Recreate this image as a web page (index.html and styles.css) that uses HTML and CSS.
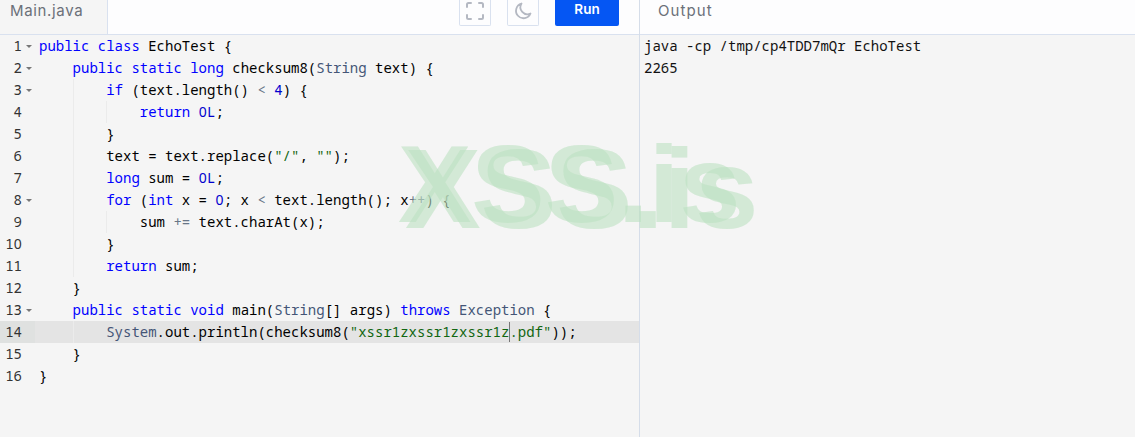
FILE: index.html
```html
<!DOCTYPE html>
<html lang="en">
<head>
<meta charset="utf-8">
<title>Main.java</title>
<link rel="stylesheet" href="styles.css">
</head>
<body>
<div class="app">
  <section class="pane editor-pane">
    <header class="bar">
      <div class="tab">Main.java</div>
      <div class="actions">
        <button class="icon-btn" aria-label="Fullscreen">
          <svg width="18" height="18" viewBox="0 0 18 18" fill="none" stroke="#b4b8c2" stroke-width="2" stroke-linecap="round" stroke-linejoin="round"><path d="M1 5V2.500Q1 1 2.500 1H5M13 1h2.500Q17 1 17 2.500V5M17 13v2.500Q17 17 15.500 17H13M5 17H2.500Q1 17 1 15.500V13"/></svg>
        </button>
        <button class="icon-btn" aria-label="Dark mode">
          <svg width="18" height="18" viewBox="0 0 18 18" fill="none" stroke="#b4b8c2" stroke-width="1.800" stroke-linejoin="round"><path d="M7.500 1.500A7.500 7.500 0 1 0 16.500 11.500 7 7 0 0 1 7.500 1.500Z"/></svg>
        </button>
        <button class="run-btn">Run</button>
      </div>
    </header>
    <div class="code">
      <div class="gutter">
        <div class="num fold">1</div><div class="num fold">2</div><div class="num fold">3</div><div class="num">4</div><div class="num">5</div><div class="num">6</div><div class="num">7</div><div class="num fold">8</div><div class="num">9</div><div class="num">1<span class="z">0</span></div><div class="num">11</div><div class="num">12</div><div class="num fold">13</div><div class="num active">14</div><div class="num">15</div><div class="num">16</div>
      </div>
      <div class="lines">
<div class="line"><span class="k">public</span> <span class="k">class</span> EchoTest {</div>
<div class="line"><span class="i1"></span><span class="k">public</span> <span class="k">static</span> <span class="k">long</span> checksum8(<span class="t">String</span> text) {</div>
<div class="line"><span class="i1"></span><span class="i1 g"></span><span class="k">if</span> (text.length() <span class="o">&lt;</span> <span class="n">4</span>) {</div>
<div class="line"><span class="i1"></span><span class="i1 g"></span><span class="i1 g"></span><span class="k">return</span> <span class="n"><span class="z">0</span>L</span>;</div>
<div class="line"><span class="i1"></span><span class="i1 g"></span>}</div>
<div class="line"><span class="i1"></span><span class="i1 g"></span>text = text.replace(<span class="s">"/"</span>, <span class="s">""</span>);</div>
<div class="line"><span class="i1"></span><span class="i1 g"></span><span class="k">long</span> sum = <span class="n"><span class="z">0</span>L</span>;</div>
<div class="line"><span class="i1"></span><span class="i1 g"></span><span class="k">for</span> (<span class="k">int</span> x = <span class="n"><span class="z">0</span></span>; x <span class="o">&lt;</span> text.length(); x<span class="o">++</span>) {</div>
<div class="line"><span class="i1"></span><span class="i1 g"></span><span class="i1 g"></span>sum <span class="o">+=</span> text.charAt(x);</div>
<div class="line"><span class="i1"></span><span class="i1 g"></span>}</div>
<div class="line"><span class="i1"></span><span class="i1 g"></span><span class="k">return</span> sum;</div>
<div class="line"><span class="i1"></span>}</div>
<div class="line"><span class="i1"></span><span class="k">public</span> <span class="k">static</span> <span class="k">void</span> main(<span class="t">String</span>[] args) <span class="k">throws</span> <span class="t">Exception</span> {</div>
<div class="line active"><span class="i1"></span><span class="i1 g"></span><span class="t">System</span>.out.println(checksum8(<span class="s">"xssr1zxssr1zxssr1z<span class="caret"></span>.pdf"</span>));</div>
<div class="line"><span class="i1"></span>}</div>
<div class="line">}</div>
      </div>
    </div>
  </section>
  <section class="pane output-pane">
    <header class="bar">
      <div class="out-title">Output</div>
    </header>
    <pre class="output">java -cp /tmp/cp4TDD7mQr EchoTest
2265</pre>
  </section>
</div>
<div class="watermark"><span class="wm wm-a">XSS.is</span><span class="wm wm-b">XSS.is</span></div>
</body>
</html>
```
FILE: styles.css
```css
* { box-sizing: border-box; }
html, body { margin: 0; height: 100%; overflow: hidden; background: #f5f5f5; }
body { width: 1135px; height: 437px; position: relative; }
.app { display: flex; height: 437px; }
.pane { display: flex; flex-direction: column; min-width: 0; }
.editor-pane { width: 640px; border-right: 1px solid #d5dde9; }
.output-pane { flex: 1; }
.bar {
  height: 35px; flex: none; background: #fdfdfe; border-bottom: 1px solid #d9e1ef;
  display: flex; align-items: flex-end; justify-content: space-between; overflow: hidden;
}
.tab {
  width: 108px; height: 34px; background: #f5f5f5; border-right: 1px solid #d9e1ef;
  padding: 0 0 0 10px; font: 400 15px/21px Inter, sans-serif; color: #6b7079;
  letter-spacing: .65px;
}
.actions { display: flex; align-items: flex-end; gap: 16px; padding: 0 20px 8px 0; }
.icon-btn {
  width: 32px; height: 26px; padding: 0 0 4px; background: #fdfdfe; border: 1px solid #d9e1ef; border-top: 0;
  border-radius: 0 0 2px 2px; display: flex; align-items: center; justify-content: center;
}
.run-btn {
  width: 64px; height: 26px; padding: 0 0 8px; background: #0556f3; color: #fff; border: 0;
  border-radius: 0 0 2px 2px; font: 600 13.5px/18px Inter, sans-serif;
}
.out-title {
  height: 34px; padding-left: 18px; font: 400 15px/21px Inter, sans-serif;
  color: #6b7079; letter-spacing: 1.1px;
}
.code { display: flex; font: 14px/22px "Noto Sans Mono", "DejaVu Sans Mono", monospace; color: #000; flex: 1; }
.gutter { width: 35px; flex: none; color: #333; }
.num { height: 22px; padding-right: 13px; text-align: right; position: relative; }
.num.active { background: #dfe1e0; }
.num.fold::after {
  content: ""; position: absolute; right: 3px; top: 10px;
  border-left: 3px solid transparent; border-right: 3px solid transparent; border-top: 3px solid #777;
}
.lines { flex: 1; min-width: 0; }
.line { height: 22px; padding-left: 4px; white-space: pre; }
.line.active { background: #e4e4e4; }
.i1 { display: inline-block; width: 33.6px; height: 22px; vertical-align: top; }
.g { box-shadow: inset 1px 0 0 #ebebeb; }
.k { color: #0000ff; }
.t { color: #445577; }
.o { color: #687687; }
.n { color: #0000cd; }
.s { color: #116611; }
.z { display: inline-block; width: 8.4px; text-align: center; font-family: "Noto Sans", sans-serif; }
.caret { display: inline-block; width: 1px; height: 20px; margin-right: -1px; background: #777; vertical-align: -5px; }
.output { margin: 0; padding: 0 0 0 4px; font: 14px/22px "Noto Sans Mono", "DejaVu Sans Mono", monospace; color: #111; }
.watermark { position: absolute; inset: 0; pointer-events: none; }
.wm {
  position: absolute; font-family: "Liberation Sans", sans-serif; font-weight: 700; line-height: 1;
  color: rgba(188, 225, 193, .6); white-space: nowrap;
}
.wm-a { left: 398px; top: 129px; font-size: 110px; }
.wm-b { left: 405px; top: 132px; font-size: 113.5px; }
```
